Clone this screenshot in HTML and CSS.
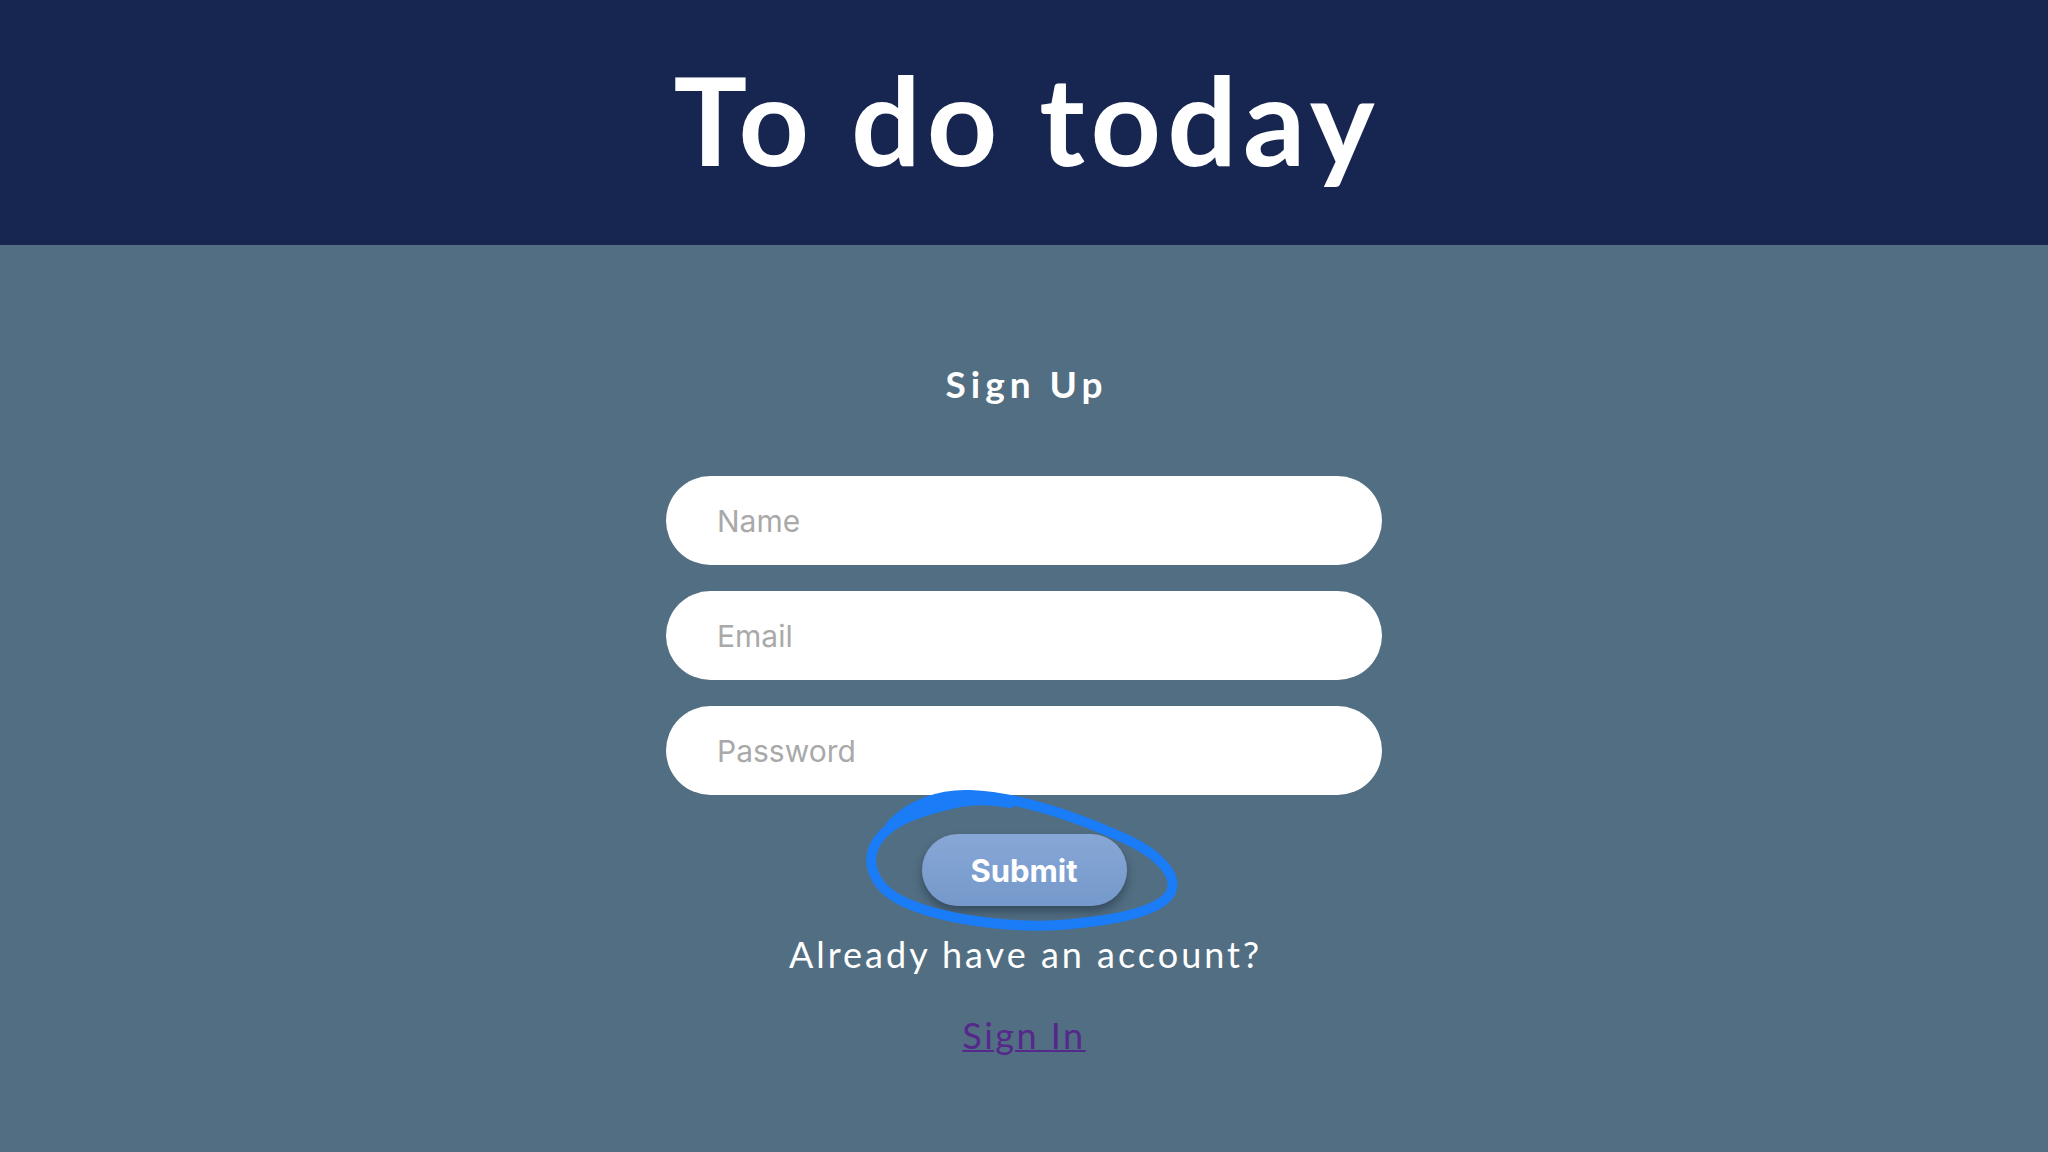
FILE: index.html
```html
<!DOCTYPE html>
<html lang="en">
<head>
<meta charset="utf-8">
<title>To do today</title>
<link rel="stylesheet" href="styles.css">
</head>
<body>
<header class="topbar">
  <h1 class="title">To do today</h1>
</header>
<main class="page">
  <h2 class="heading">Sign Up</h2>
  <form class="form">
    <input class="field" type="text" placeholder="Name">
    <input class="field" type="email" placeholder="Email">
    <input class="field" type="password" placeholder="Password">
    <div class="submit-wrap">
      <button class="submit" type="button">Submit</button>
      <svg class="scribble" width="325" height="155" viewBox="0 0 325 155" aria-hidden="true">
        <path d="M 30 42 C 50 20, 80 10, 110 11 C 160 13, 220 34, 268 56 C 300 71, 318 92, 311 108 C 302 126, 262 136, 200 141 C 150 144, 82 136, 42 117 C 12 102, 4 76, 18 56 C 32 36, 62 26, 100 18 C 118 15, 135 16, 150 19" fill="none" stroke="#1a7cf6" stroke-width="10" stroke-linecap="round" stroke-linejoin="round"/>
      </svg>
    </div>
  </form>
  <p class="prompt">Already have an account?</p>
  <a class="link" href="#">Sign In</a>
</main>
</body>
</html>
```

FILE: styles.css
```css
html, body {
  margin: 0;
  padding: 0;
}

body {
  background: #526e82;
  font-family: "Lato", "Open Sans", sans-serif;
  min-height: 1152px;
}

.topbar {
  background: #162650;
  height: 245px;
  display: flex;
  align-items: center;
  justify-content: center;
}

.title {
  margin: 0 0 8px;
  color: #ffffff;
  font-family: "Lato", sans-serif;
  font-weight: 700;
  font-size: 123px;
  line-height: 1;
  letter-spacing: 6px;
  text-indent: 6px;
}

.page {
  display: flex;
  flex-direction: column;
  align-items: center;
}

.heading {
  margin: 117px 0 0;
  color: #ffffff;
  font-family: "Lato", sans-serif;
  font-weight: 700;
  font-size: 37px;
  line-height: 1.2;
  letter-spacing: 5px;
  text-indent: 5px;
}

.form {
  margin-top: 70px;
  display: flex;
  flex-direction: column;
  align-items: center;
  gap: 26px;
}

.field {
  box-sizing: border-box;
  width: 716px;
  height: 89px;
  border: none;
  border-radius: 45px;
  background: #ffffff;
  padding: 0 0 0 51px;
  font-family: "Inter", "Liberation Sans", sans-serif;
  font-size: 30px;
  color: #333;
  outline: none;
}

.field::placeholder {
  color: #a9a9a9;
}

.submit-wrap {
  position: relative;
  margin-top: 13px;
}

.submit {
  display: block;
  width: 205px;
  height: 72px;
  border: none;
  border-radius: 36px;
  background: linear-gradient(#87a7d6, #7599cb);
  box-shadow: 0 6px 10px rgba(20, 35, 55, 0.45);
  color: #ffffff;
  font-family: "Inter", "Liberation Sans", sans-serif;
  font-weight: 700;
  font-size: 31px;
  cursor: pointer;
}

.scribble {
  position: absolute;
  left: -62px;
  top: -50px;
  pointer-events: none;
}

.prompt {
  margin: 27px 0 0;
  color: #ffffff;
  font-family: "Lato", sans-serif;
  font-size: 36px;
  line-height: 1.2;
  letter-spacing: 3px;
  text-indent: 3px;
}

.link {
  margin-top: 37px;
  color: #55288c;
  font-family: "Lato", sans-serif;
  font-size: 36px;
  line-height: 1.2;
  letter-spacing: 2.5px;
  text-decoration: underline;
  text-decoration-thickness: 2px;
}
```
